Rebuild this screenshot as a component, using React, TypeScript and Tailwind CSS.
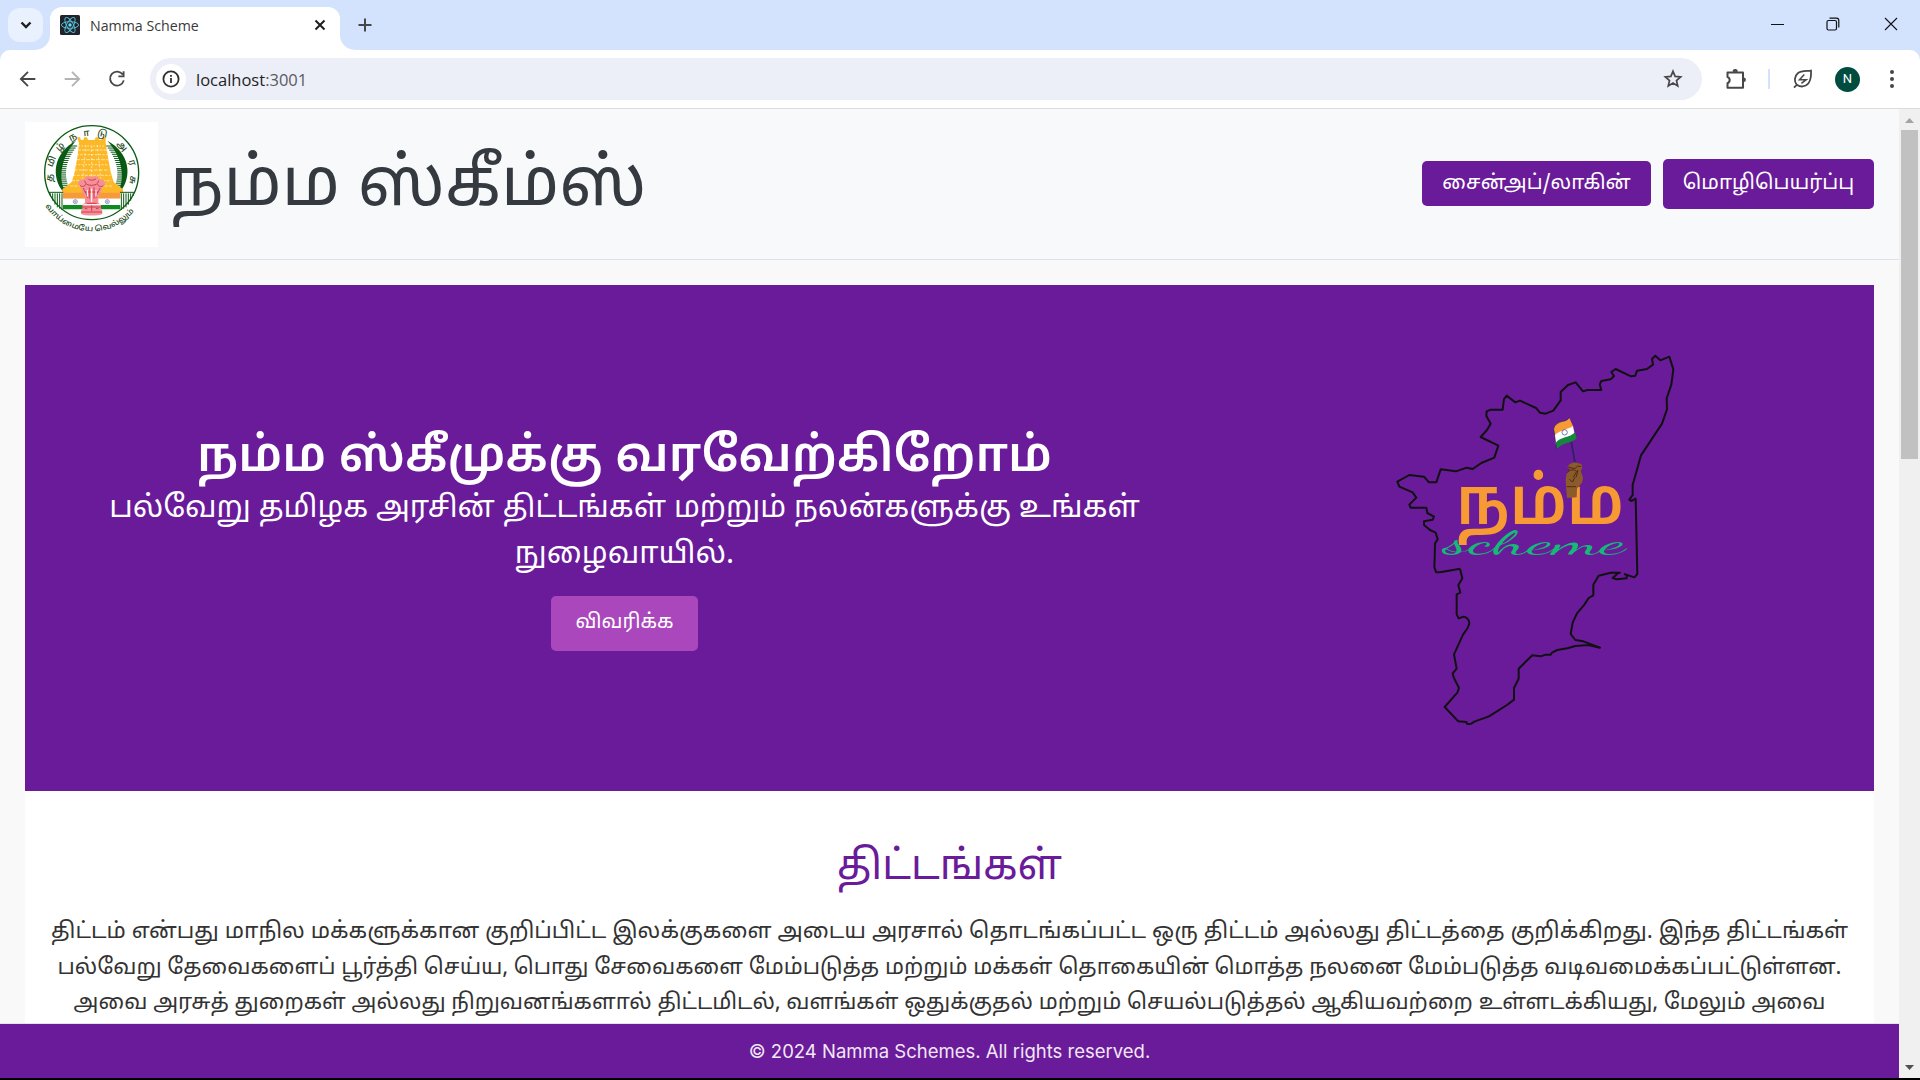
import type { ReactNode } from "react";

const TAMIL = "font-['Noto_Sans_Tamil','Noto_Sans',sans-serif]";

function Glyph({ children, className }: { children: ReactNode; className: string }) {
  return (
    <svg viewBox="0 0 24 24" fill="none" stroke="currentColor" strokeWidth="2" className={className}>
      {children}
    </svg>
  );
}

function ReactFavicon() {
  return (
    <svg viewBox="0 0 20 20" className="size-5 shrink-0">
      <rect width="20" height="20" rx="1.5" fill="#20232a" />
      <g fill="none" stroke="#58c4dc" strokeWidth="0.9">
        <ellipse cx="10" cy="10" rx="8.6" ry="3.3" />
        <ellipse cx="10" cy="10" rx="8.6" ry="3.3" transform="rotate(60 10 10)" />
        <ellipse cx="10" cy="10" rx="8.6" ry="3.3" transform="rotate(120 10 10)" />
      </g>
      <circle cx="10" cy="10" r="1.7" fill="#61dafb" />
    </svg>
  );
}

function TabStrip() {
  return (
    <div className="flex h-[50px] bg-[#d3e3fd] pl-2">
      <div className="mt-2 flex h-[34px] w-[35px] items-center justify-center rounded-xl bg-[#e9f0fe] text-[#1f1f1f]">
        <svg viewBox="0 0 12 8" className="h-2 w-3" fill="none" stroke="currentColor" strokeWidth="2.4">
          <path d="M1.5 1.5 6 6l4.5-4.5" />
        </svg>
      </div>
      <div className="flex w-[7px] items-end justify-end">
        <svg viewBox="0 0 15 15" className="-ml-2 size-[15px] shrink-0" fill="#fff">
          <path d="M15 0v15H0A15 15 0 0 0 15 0Z" />
        </svg>
      </div>
      <div className="mt-[7px] flex h-[43px] w-[290px] items-start rounded-t-xl bg-white pl-[10px] pr-[13px] pt-2">
        <ReactFavicon />
        <span className="ml-[10px] flex-1 whitespace-nowrap font-['Open_Sans',sans-serif] text-[14.2px] leading-[21px] text-[#3a3a3a]">
          Namma Scheme
        </span>
        <svg viewBox="0 0 12 12" className="mr-[1px] mt-1 size-3" stroke="#1f1f1f" strokeWidth="2">
          <path d="m1.5 1.5 9 9m0-9-9 9" />
        </svg>
      </div>
      <div className="flex w-[15px] items-end">
        <svg viewBox="0 0 15 15" className="size-[15px]" fill="#fff">
          <path d="M0 0v15h15A15 15 0 0 1 0 0Z" />
        </svg>
      </div>
      <svg viewBox="0 0 14 14" className="ml-[3px] mt-[18px] size-[14px]" stroke="#474747" strokeWidth="2">
        <path d="M7 0.5v13M0.5 7h13" />
      </svg>
      <div className="flex flex-1 justify-end pr-[22px] pt-[17px] text-[#111]">
        <svg viewBox="0 0 13 14" className="mr-[42px] h-[14px] w-[13px]" stroke="currentColor">
          <path d="M0 7.5h13" />
        </svg>
        <svg viewBox="0 0 14 14" className="mr-[44px] size-[14px]" fill="none" stroke="currentColor">
          <rect x="1" y="3.5" width="9.5" height="9.5" rx="1.5" strokeWidth="1.2" />
          <path d="M3.5 1.2h7a2.3 2.3 0 0 1 2.3 2.3v7" strokeWidth="1.2" />
        </svg>
        <svg viewBox="0 0 14 14" className="size-[14px]" stroke="currentColor" strokeWidth="1.1">
          <path d="m1 1 12 12M13 1 1 13" />
        </svg>
      </div>
    </div>
  );
}

function Toolbar() {
  return (
    <div className="h-[58px] bg-[#d3e3fd]">
      <div className="flex h-[58px] items-center rounded-t-[10px] bg-white pl-[17px] text-[#474747]">
        <Glyph className="size-[22px]">
          <path d="M20 12H4.5M12 4.2 4.2 12l7.8 7.8" />
        </Glyph>
        <Glyph className="ml-[22px] size-[22px] text-[#b3b3b3]">
          <path d="M4 12h15.5M12 4.2 19.800 12 12 19.8" />
        </Glyph>
        <Glyph className="ml-[23px] size-[22px]">
          <path d="M18.3 7.2A7.6 7.6 0 1 0 19.4 13.5M19.2 3.5v5.7h-5.7" />
        </Glyph>
        <div className="ml-[22px] flex h-[42px] w-[1552px] items-center rounded-full bg-[#eceef8] pl-[6px] pr-[19px]">
          <div className="flex size-[30px] items-center justify-center rounded-full bg-white text-[#303030]">
            <svg viewBox="0 0 18 18" className="size-[18px]" fill="none" stroke="currentColor" strokeWidth="1.8">
              <circle cx="9" cy="9" r="7.6" />
              <path d="M9 8v5M9 4.9v1.9" />
            </svg>
          </div>
          <span className="ml-[10px] flex-1 pt-px font-['Open_Sans',sans-serif] text-[16.5px] leading-6 text-[#5a5a5e]">
            <span className="text-[#1f1f1f]">localhost</span>:3001
          </span>
          <svg viewBox="0 0 20 20" className="size-5 text-[#474747]" fill="none" stroke="currentColor" strokeWidth="1.7">
            <path d="m10 2.3 2.15 5.1 5.5.48-4.18 3.62 1.26 5.38L10 14.02l-4.73 2.86 1.26-5.38-4.18-3.62 5.5-.48Z" />
          </svg>
        </div>
        <svg viewBox="0 0 22 22" className="ml-[23px] size-[22px]" fill="none" stroke="currentColor" strokeWidth="2">
          <path d="M2.5 4.5H18v15.2H2.5v-4.5a3.3 3.3 0 0 0 0-6.2Z" strokeLinejoin="round" />
          <path d="M8 3.8a2.2 2.2 0 0 1 4.4 0ZM18.7 9.6a2.2 2.2 0 0 1 0 4.4Z" fill="currentColor" stroke="none" />
          <path d="M8.3 3.5a2 2 0 0 1 3.8 0" />
        </svg>
        <div className="ml-[21px] h-5 w-[2px] bg-[#d3e3fd]" />
        <svg viewBox="0 0 20 20" className="ml-[23px] size-5" fill="none" stroke="currentColor" strokeWidth="1.8">
          <path d="M3.8 15.800C.9 12.5 1.3 7.3 4.8 4.3 8.1 1.5 13 2.2 18 1.6c.3 5-.2 9.6-2.7 12.9-3 3.9-8 3.6-11.5 1.3L1 18.6" />
          <path d="M11.3 5.6 6.5 10.7h6.7L8.4 14.3" strokeWidth="1.5" />
        </svg>
        <div className="ml-[22px] flex size-[25px] items-center justify-center rounded-full bg-[#004d40] font-[Roboto,sans-serif] text-[13px] text-white">
          N
        </div>
        <svg viewBox="0 0 4 18" className="ml-[30px] h-[18px] w-1" fill="currentColor">
          <circle cx="2" cy="2" r="2" />
          <circle cx="2" cy="9" r="2" />
          <circle cx="2" cy="16" r="2" />
        </svg>
      </div>
    </div>
  );
}

const RING_LETTERS: [string, number, number, number][] = [
  ["த", 59, 203, -82],
  ["மி", 64, 154, -66],
  ["ழ்", 90, 110, -46],
  ["ந", 128, 81, -26],
  ["\u00a0ா", 166, 69, -5],
  ["டு", 217, 71, 12],
  ["அ", 277, 108, 48],
  ["ர", 308, 158, 72],
  ["சு", 309, 210, 98],
];

const RAYS = Array.from({ length: 22 }, (_, i) => 108 + i * 6.2);

function StateEmblem() {
  return (
    <svg viewBox="-15 36 399 375" className="h-[125px] w-[133px] bg-white">
      <circle cx="185" cy="188" r="141" fill="none" stroke="#0b5a14" strokeWidth="4" />
      <path
        d="M138 92C70 128 62 200 100 246h6C84 206 92 142 138 92ZM232 92c68 36 76 108 38 154h-6c22-40 14-104-32-154Z"
        fill="#0b5a14"
      />
      <g stroke="#0b5a14" strokeWidth="3">
        {RAYS.map((y) => {
          const inset = 86 + (y - 190) ** 2 * 0.005;
          return <path key={y} d={`M${inset} ${y}h22M${370 - inset} ${y}h-22`} />;
        })}
      </g>
      <path
        d="M141 82h9l3 8h7l3-8h8l3 8h20l3-8h8l3 8h7l3-8h9v16l6 38 9 50 9 30 28 22v12H97v-12l28-22 9-30 9-50 4-38Z"
        fill="#fdb827"
      />
      <g stroke="#fff" strokeOpacity="0.75" strokeWidth="2.4" fill="none">
        <path d="M145 108h80" strokeDasharray="5 4" />
        <path d="M143 120h88" strokeDasharray="10 3" />
        <path d="M140 134h92" strokeDasharray="7 4" />
        <path d="M138 149h96" strokeDasharray="12 3" />
        <path d="M135 164h100" strokeDasharray="6 4" />
        <path d="M132 180h106" strokeDasharray="11 4" />
        <path d="M129 196h112" strokeDasharray="8 4" />
        <path d="M126 212h118M120 228h130" strokeDasharray="9 4" />
        <path d="M168 106 158 206M202 106l10 100M185 108v92" strokeDasharray="6 6" />
      </g>
      <path d="M56 247h44M270 247h44" stroke="#0b5a14" strokeWidth="3" />
      <path
        d="M61 250v8M68 250v22M75 250v34M82 250v42M89 250v46M96 250v50M309 250v8M302 250v22M295 250v34M288 250v42M281 250v46M274 250v50"
        stroke="#0b5a14"
        strokeWidth="3"
      />
      <path d="M99 248h172v18H99z" fill="#f79a3e" />
      <path d="M99 266h172v19H99z" fill="#fff" />
      <path d="M99 285h172v13H99z" fill="#0f8a1f" />
      <g fill="none" stroke="#5a62b8" strokeWidth="2">
        <circle cx="136" cy="275" r="6" />
        <circle cx="136" cy="275" r="2" />
        <circle cx="232" cy="275" r="6" />
        <circle cx="232" cy="275" r="2" />
      </g>
      <path
        d="M146 226c-5-10 4-20 16-18 2-9 14-11 23-7 10-4 21-2 24 7 12-2 20 8 15 18l-8 8-4 16-7 6v22l8 6v14l4 4v10c-14 6-50 6-64 0v-10l4-4v-14l8-6v-22l-8-6-3-16Z"
        fill="#f3919a"
      />
      <g fill="none" stroke="#d43a4a" strokeWidth="3">
        <path d="M164 212c2 10 8 14 20 14s20-4 22-14M150 226c6 6 14 4 18-4M220 226c-6 6-14 4-18-4M174 206c4 6 18 6 24 0" />
        <path d="M160 234c4 12 12 18 12 30M210 234c-4 12-12 18-12 30M178 232v34M192 232v34M164 246h42M170 280h30M156 291h58M154 306h62M185 286v18M164 296h8M198 296h8" />
      </g>
      <path d="M172 240v20M198 240v20M185 236v40M160 284h52" stroke="#fff" strokeWidth="3" />
      <g fill="#1c4a20" fontSize="28" fontWeight="500" textAnchor="middle">
        {RING_LETTERS.map(([ch, x, y, deg]) => (
          <text key={`${x}`} transform={`translate(${x} ${y}) rotate(${deg})`} y="9">
            {ch}
          </text>
        ))}
      </g>
      <path id="motto" d="M46 288A166 166 0 0 0 324 288" fill="none" />
      <text fill="#1c4a20" fontSize="23" fontWeight="500">
        <textPath href="#motto" textLength="310" lengthAdjust="spacingAndGlyphs">
          வாய்மையே வெல்லும்
        </textPath>
      </text>
    </svg>
  );
}

function SiteHeader() {
  return (
    <header className="flex h-[151px] items-center border-b border-[#dee2e6] bg-[#f8f9fb] px-[25px]">
      <StateEmblem />
      <h1 className="ml-[12px] flex-1 whitespace-nowrap pt-[8px] text-[67.9px] leading-[90px] text-[#343a40]">நம்ம ஸ்கீம்ஸ்</h1>
      <button className="mb-px flex h-[45px] w-[229px] justify-center rounded-[5px] bg-[#6a1b9a] text-[20.4px] leading-[47px] text-white">
        சைன்அப்/லாகின்
      </button>
      <button className="ml-3 flex h-[50px] w-[211px] justify-center rounded-[5px] bg-[#6a1b9a] text-[20.5px] leading-[51px] text-white">
        மொழிபெயர்ப்பு
      </button>
    </header>
  );
}

function StateMapLogo() {
  return (
    <svg viewBox="0 0 990 1350" className="h-[450px] w-[330px]">
      <g fill="none" stroke="#111" strokeWidth="6" strokeLinejoin="round">
        <path d="M270 716 210 727H198L193 710 194 686 195 640 203 628 197 608 180 600 162 585V574L188 569 192 560 172 549 169 533H122L118 524 139 503 128 487 88 470 82 455 118 435 162 440 177 457H199L212 418 258 424 290 413 308 417 334 399 373 383 385 347 332 321 351 300 362 281 349 258 350 244 362 239H398L402 207 410 197 436 217 450 212 498 234 510 248 527 251 550 242 572 211V186L594 165 617 157 639 184 652 180H694L689 163 694 153 722 148 732 138 724 126 737 117 783 139 796 137 801 122 831 117 849 104 846 87 856 77 871 91 898 80 910 118 904 164 890 205 891 238 876 281 813 376 798 430 788 465V495L778 509 784 513 797 506 802 732 793 742 762 732M770 733V745L741 748 728 744 742 731 750 728 722 728 686 737 670 764V796L656 804 643 824 621 850 608 878 602 912 616 930 640 934 690 953 655 945 616 948 592 955 562 960 546 968 542 974 527 974 512 979 487 976 446 1016V1046L432 1074V1109L411 1125 357 1159 313 1175 304 1181 292 1182 289 1176 265 1174 224 1131 262 1088 267 1074 251 1042 248 1030 260 1016 252 973 279 914 293 894 298 880C298 868 286 858 278 861L266 865 260 853V793L271 788 265 766 277 745 270 716" />
      </g>
      <text x="258" y="581" fontSize="199" fontWeight="600" fill="#f79a33" textLength="504" lengthAdjust="spacingAndGlyphs">
        நம்ம
      </text>
      <text x="220" y="672" fontSize="104" fill="#17b978" textLength="545" lengthAdjust="spacingAndGlyphs" className="font-['Dancing_Script',cursive]">
        scheme
      </text>
      <path d="m602 325 14 78" stroke="#2b2260" strokeWidth="5" />
      <path d="M598 264c-5 6-12 9-20 10-14 3-25 11-27 24l6 26c14-18 34-22 53-34Z" fill="#f79a33" />
      <path d="M554 316c12-14 36-16 55-27l5 22c-14 16-38 14-57 32Z" fill="#fff" />
      <path d="M557 338c14-18 42-14 58-31l5 18c-16 16-43 12-60 33Z" fill="#15883e" />
      <path d="M598 263c-5 7-12 10-20 11-14 3-27 13-27 24l9 60" fill="none" stroke="#2b2260" strokeWidth="2" />
      <circle cx="584" cy="307" r="8" fill="none" stroke="#5b63a8" strokeWidth="2.5" />
      <path d="m592 411 8-10 14-4 20 5 3 10-5 12 7 18-2 14-16 20-1 26-29 2-3-34-1-20 3-22 11-8Z" fill="#8c5a2b" />
      <path
        d="m594 411 20 5 10-8 10 2M590 430c10-14 22-12 30-6l-10 18M598 448l10 8 6-14M590 470h28M624 420l-6 22"
        fill="none"
        stroke="#3f2612"
        strokeWidth="2.5"
      />
    </svg>
  );
}

function Hero() {
  return (
    <section className="mt-[25px] flex h-[506px] bg-[#6a1b9a] text-white">
      <div className="flex w-[1199px] flex-col items-center pt-[144px] text-center">
        <h2 className="whitespace-nowrap text-[48.4px] font-semibold leading-[60px]">நம்ம ஸ்கீமுக்கு வரவேற்கிறோம்</h2>
        <p className="-mt-[2px] w-[1060px] text-[30.2px] leading-[45.5px]">
          பல்வேறு தமிழக அரசின் திட்டங்கள் மற்றும் நலன்களுக்கு உங்கள் நுழைவாயில்.
        </p>
        <button className="mt-[18px] h-[55px] w-[147px] rounded-[5px] bg-[#ab47bc] text-[20px] leading-[55px]">விவரிக்க</button>
      </div>
      <div className="ml-[146px] mt-[45px]">
        <StateMapLogo />
      </div>
    </section>
  );
}

function Schemes() {
  return (
    <section className="h-[232px] overflow-hidden bg-white pt-[48px] text-center">
      <h2 className="text-[41.6px] leading-[60px] text-[#6a1b9a]">திட்டங்கள்</h2>
      <div className="mt-[16px] whitespace-nowrap text-[22.2px] leading-[35.5px] text-[#333]">
        <p className="text-[22.5px]">
          திட்டம் என்பது மாநில மக்களுக்கான குறிப்பிட்ட இலக்குகளை அடைய அரசால் தொடங்கப்பட்ட ஒரு திட்டம் அல்லது திட்டத்தை குறிக்கிறது. இந்த திட்டங்கள்
        </p>
        <p>
          பல்வேறு தேவைகளைப் பூர்த்தி செய்ய, பொது சேவைகளை மேம்படுத்த மற்றும் மக்கள் தொகையின் மொத்த நலனை மேம்படுத்த வடிவமைக்கப்பட்டுள்ளன.
        </p>
        <p>
          அவை அரசுத் துறைகள் அல்லது நிறுவனங்களால் திட்டமிடல், வளங்கள் ஒதுக்குதல் மற்றும் செயல்படுத்தல் ஆகியவற்றை உள்ளடக்கியது, மேலும் அவை
        </p>
      </div>
    </section>
  );
}

function Scrollbar() {
  return (
    <div className="flex h-full w-[21px] flex-col items-center bg-[#f0f0f0]">
      <svg viewBox="0 0 9 5" className="mt-[9px] h-[5px] w-[9px]" fill="#a3a3a3">
        <path d="M0 5 4.5 0 9 5Z" />
      </svg>
      <div className="mt-[7px] h-[329px] w-[17px] bg-[#c1c1c1]" />
      <svg viewBox="0 0 9 5" className="mb-[8px] mt-auto h-[5px] w-[9px]" fill="#505050">
        <path d="M0 0h9L4.5 5Z" />
      </svg>
    </div>
  );
}

export default function App() {
  return (
    <div className="flex h-[1080px] w-[1920px] flex-col overflow-hidden bg-black">
      <TabStrip />
      <Toolbar />
      <div className="flex h-[970px] border-t border-[#dcdcdc]">
        <div className={`flex w-[1899px] flex-col bg-[#f9f9f9] ${TAMIL}`}>
          <SiteHeader />
          <main className="flex-1 px-[25px]">
            <Hero />
            <Schemes />
          </main>
          <footer className="h-[55px] border-t border-[#e3e3e6] bg-[#6a1b9a] text-center font-[Inter,sans-serif] text-[18.5px] leading-[54px] text-[#f1e8f5]">
            © 2024 Namma Schemes. All rights reserved.
          </footer>
        </div>
        <Scrollbar />
      </div>
    </div>
  );
}
